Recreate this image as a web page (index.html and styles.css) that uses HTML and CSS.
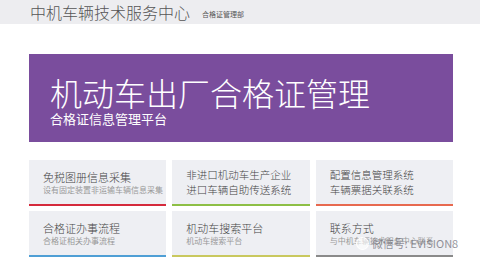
FILE: index.html
```html
<!DOCTYPE html>
<html lang="zh-CN">
<head>
  <meta charset="UTF-8">
  <title>中机车辆技术服务中心</title>
  <link rel="stylesheet" href="styles.css">
</head>
<body>
  <header>
    <span class="logo">中机车辆技术服务中心</span>
    <span class="dept">合格证管理部</span>
  </header>

  <main>
    <div class="banner">
      <h1>机动车出厂合格证管理</h1>
      <p>合格证信息管理平台</p>
    </div>

    <div class="cards">
      <div class="card red">
        <div class="title">免税图册信息采集</div>
        <div class="sub">设有固定装置非运输车辆信息采集</div>
      </div>
      <div class="card green">
        <div class="line">非进口机动车生产企业</div>
        <div class="line">进口车辆自助传送系统</div>
      </div>
      <div class="card orange">
        <div class="line">配置信息管理系统</div>
        <div class="line">车辆票据关联系统</div>
      </div>
      <div class="card blue">
        <div class="title">合格证办事流程</div>
        <div class="sub">合格证相关办事流程</div>
      </div>
      <div class="card olive">
        <div class="title">机动车搜索平台</div>
        <div class="sub">机动车搜索平台</div>
      </div>
      <div class="card gray">
        <div class="title">联系方式</div>
        <div class="sub">与中机车辆技术服务中心联系</div>
        <div class="watermark"><span class="wm-icon"></span>微信号: EVISION8</div>
      </div>
    </div>
  </main>
</body>
</html>
```

FILE: styles.css
```css
body {
  margin: 0;
  font-family: "Noto Sans CJK SC", "Noto Sans", sans-serif;
  background-color: #fff;
  color: #444;
}
header {
  display: flex;
  align-items: center;
  height: 24px;
  padding-left: 30px;
  background-color: #ededf0;
}
header .logo {
  font-size: 16px;
  line-height: 1;
  font-weight: 300;
  color: #555;
}
header .dept {
  margin-left: 12px;
  margin-top: 3px;
  font-size: 7px;
  color: #555;
}
main {
  padding: 30px 27px 0 29px;
}
.banner {
  height: 88px;
  box-sizing: border-box;
  padding: 20px 21px 0;
  background-color: #7a4d9d;
  color: #fff;
}
.banner h1 {
  margin: 0;
  font-size: 32px;
  font-weight: 300;
  line-height: 36px;
}
.banner p {
  margin: 1px 0 0;
  font-size: 13px;
  line-height: 15px;
}
.cards {
  display: grid;
  grid-template-columns: repeat(3, 1fr);
  gap: 5px 6px;
  margin-top: 18px;
}
.card {
  position: relative;
  display: flex;
  flex-direction: column;
  justify-content: center;
  height: 46px;
  box-sizing: border-box;
  padding: 0 2px 0 14px;
  background-color: #eeeff3;
  border-bottom: 2px solid #888;
  white-space: nowrap;
}
.card .title {
  font-size: 11px;
  line-height: 14px;
  font-weight: 300;
  color: #444;
}
.card .sub {
  font-size: 8px;
  line-height: 11px;
  color: #999;
}
.card .line {
  font-size: 10.5px;
  line-height: 15px;
  font-weight: 300;
  color: #444;
}
.card.red { border-bottom-color: #d52a3c; }
.card.green { border-bottom-color: #8dbf45; }
.card.orange { border-bottom-color: #e7694f; }
.card.blue { border-bottom-color: #4f9fd5; }
.card.olive { border-bottom-color: #c9c85e; }
.card.gray { border-bottom-color: #8a8a8a; }
.watermark {
  position: absolute;
  left: 40px;
  top: 24px;
  display: flex;
  align-items: center;
  font-size: 11px;
  color: rgba(110, 110, 120, 0.75);
}
.wm-icon {
  width: 11px;
  height: 11px;
  margin-right: 3px;
  border: 1px solid rgba(255, 255, 255, 0.9);
  border-radius: 50%;
  background-color: rgba(255, 255, 255, 0.6);
}
```
